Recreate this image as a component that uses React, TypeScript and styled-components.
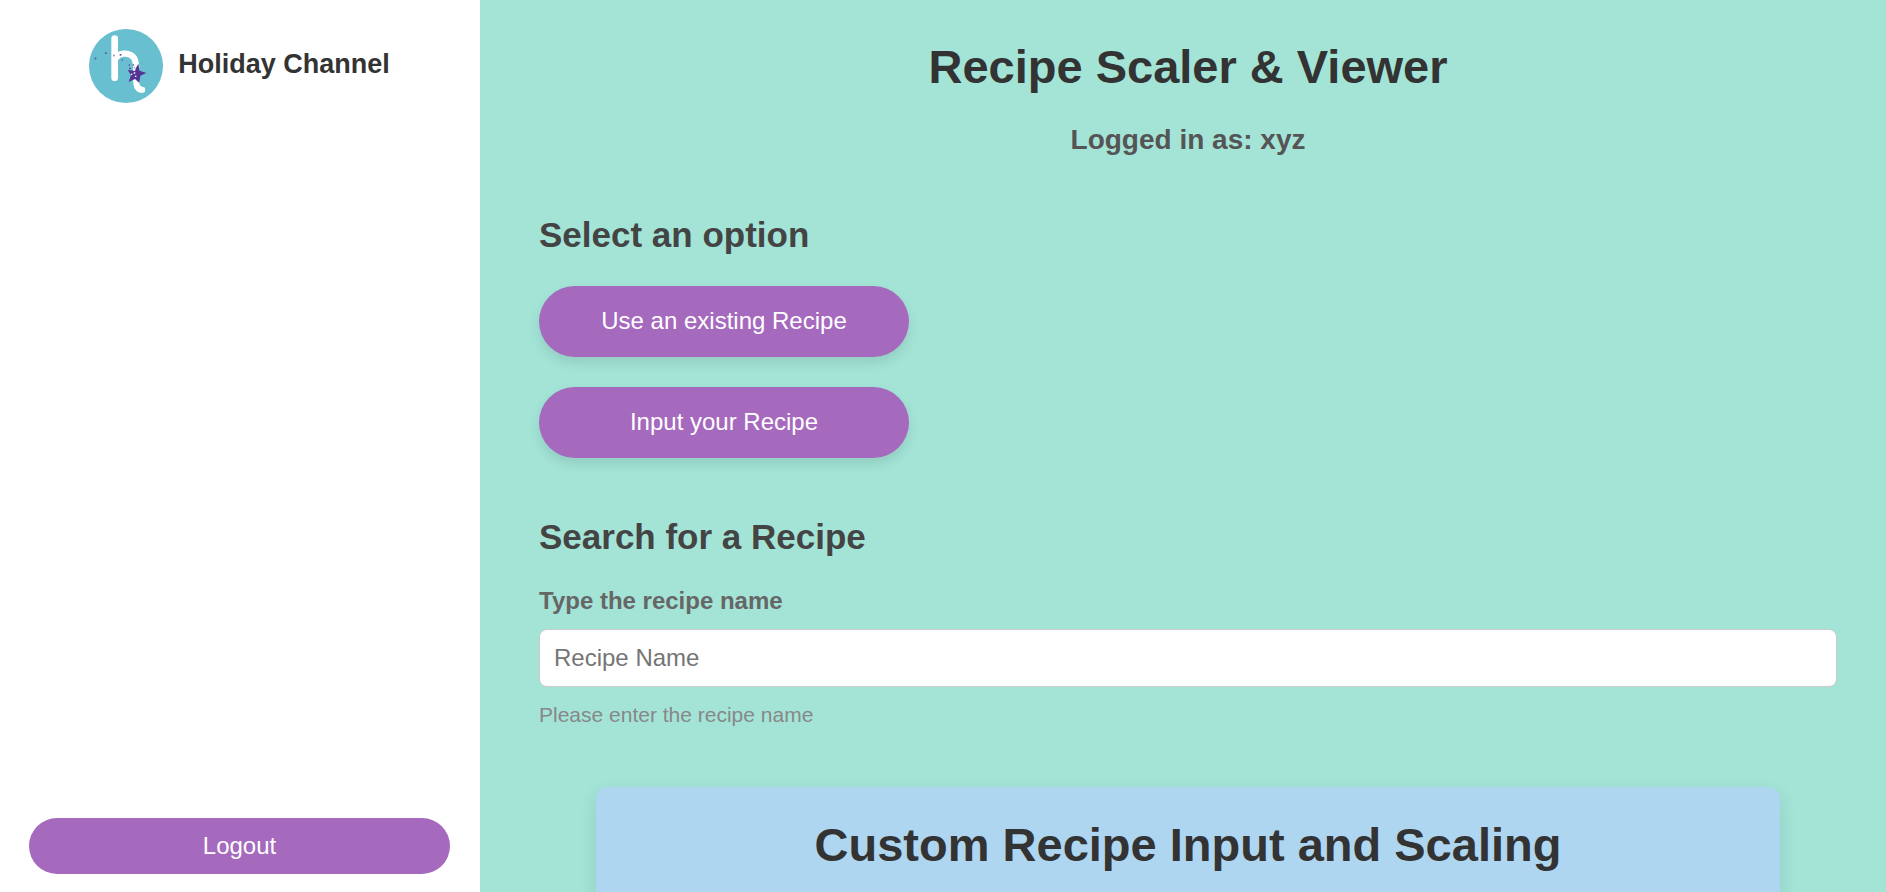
import React from "react";
import styled, { createGlobalStyle } from "styled-components";

const GlobalStyle = createGlobalStyle`
  *, *::before, *::after { box-sizing: border-box; }
  body {
    margin: 0;
    background: #a3e4d7;
    font-family: Arial, "Liberation Sans", sans-serif;
    color: #333;
  }
`;

const Page = styled.div`
  display: flex;
  height: 100vh;
  overflow: hidden;
`;

const Sidebar = styled.aside`
  flex: 0 0 480px;
  display: flex;
  flex-direction: column;
  justify-content: space-between;
  padding: 29px 30px 18px 29px;
  background: #fff;
`;

const Brand = styled.div`
  display: flex;
  align-items: center;
  justify-content: center;
  gap: 15px;
`;

const BrandLogo = styled.svg`
  display: block;
  width: 74px;
  height: 74px;
`;

const BrandName = styled.span`
  font-size: 27px;
  line-height: 30px;
  font-weight: bold;
  padding-bottom: 4px;
`;

const PillButton = styled.button<{ $raised?: boolean }>`
  width: 100%;
  max-width: ${({ $raised }) => ($raised ? "370px" : "none")};
  padding: ${({ $raised }) => ($raised ? "21px 24px 22px" : "14px 24px")};
  border: 0;
  border-radius: ${({ $raised }) => ($raised ? "36px" : "28px")};
  background: #a569bd;
  color: #fff;
  font-family: inherit;
  font-size: 24px;
  line-height: 28px;
  cursor: pointer;
  box-shadow: ${({ $raised }) => ($raised ? "0 6px 12px rgba(0, 0, 0, 0.1)" : "none")};
`;

const Main = styled.main`
  flex: 1;
  min-width: 0;
  overflow: hidden;
  padding: 39px 49px 0 59px;
`;

const Title = styled.h1`
  margin: 0;
  font-size: 47px;
  line-height: 56px;
  text-align: center;
`;

const UserLine = styled.h3`
  margin: 29px 0 0;
  font-size: 28px;
  line-height: 32px;
  text-align: center;
  color: #555;
`;

const Section = styled.section`
  display: flex;
  flex-direction: column;
  margin-top: 58px;
`;

const SectionTitle = styled.h2`
  margin: 0;
  font-size: 35px;
  line-height: 42px;
  color: #444;
`;

const Options = styled.div`
  display: flex;
  flex-direction: column;
  gap: 30px;
  margin-top: 30px;
`;

const Label = styled.label`
  margin-top: 29px;
  font-size: 24px;
  line-height: 28px;
  font-weight: bold;
  color: #666;
`;

const TextInput = styled.input`
  margin-top: 14px;
  width: 100%;
  padding: 14px 14px;
  border: 1px solid #ccc;
  border-radius: 8px;
  background: #fff;
  font-family: inherit;
  font-size: 24px;
  line-height: 28px;
  color: #333;
  &::placeholder { color: #757575; opacity: 1; }
`;

const Hint = styled.p`
  margin: 16px 0 0;
  font-size: 21px;
  line-height: 24px;
  color: #888;
`;

const Card = styled.section`
  margin: 60px 57px 0;
  padding: 30px 30px 60px;
  border-radius: 12px;
  background: #aed6f1;
  box-shadow: 0 6px 18px rgba(0, 0, 0, 0.1);
`;

const Logo = () => (
  <BrandLogo viewBox="30 28 222 222" role="img" aria-label="Holiday Channel logo">
    <circle cx="141" cy="139" r="111" fill="#67bfd0" />
    <g fill="none" stroke="#fff" strokeLinecap="round">
      <path d="M107 57V174" strokeWidth="20" />
      <path d="M110 116C118 100 146 97 161 110C171 119 172 137 172 153V181C172 201 178 210 189 210" strokeWidth="19" />
    </g>
    <path d="M178 132L182 153L202 160L184 168L181 190L168 178L149 187L156 166L146 151L166 153Z" fill="#543596" />
    <g fill="#fff">
      <rect x="164" y="148" width="5" height="5" />
      <rect x="164" y="158" width="5" height="4" />
      <rect x="168" y="168" width="4" height="4" />
      <rect x="156" y="162" width="4" height="4" />
    </g>
    <g fill="#67bfd0">
      <circle cx="184" cy="194" r="3" />
      <circle cx="191" cy="200" r="3" />
      <circle cx="196" cy="194" r="2" />
    </g>
    <g fill="#6546a3">
      <rect x="47" y="114" width="5" height="5" />
      <rect x="78" y="98" width="5" height="5" />
      <rect x="122" y="103" width="5" height="5" />
      <rect x="128" y="119" width="4" height="4" />
      <rect x="149" y="134" width="4" height="4" />
      <rect x="150" y="144" width="5" height="5" />
      <rect x="161" y="134" width="4" height="4" />
    </g>
    <g fill="#a99bd3">
      <rect x="102" y="105" width="6" height="5" />
      <rect x="144" y="124" width="5" height="5" />
      <rect x="164" y="142" width="4" height="4" />
    </g>
  </BrandLogo>
);

export default function App() {
  return (
    <>
      <GlobalStyle />
      <Page>
        <Sidebar>
          <Brand>
            <Logo />
            <BrandName>Holiday Channel</BrandName>
          </Brand>
          <PillButton type="button">Logout</PillButton>
        </Sidebar>
        <Main>
          <Title>Recipe Scaler &amp; Viewer</Title>
          <UserLine>Logged in as: xyz</UserLine>
          <Section>
            <SectionTitle>Select an option</SectionTitle>
            <Options>
              <PillButton type="button" $raised>Use an existing Recipe</PillButton>
              <PillButton type="button" $raised>Input your Recipe</PillButton>
            </Options>
          </Section>
          <Section>
            <SectionTitle>Search for a Recipe</SectionTitle>
            <Label htmlFor="recipe-name">Type the recipe name</Label>
            <TextInput id="recipe-name" type="text" placeholder="Recipe Name" aria-describedby="recipe-hint" />
            <Hint id="recipe-hint">Please enter the recipe name</Hint>
          </Section>
          <Card>
            <Title as="h2">Custom Recipe Input and Scaling</Title>
          </Card>
        </Main>
      </Page>
    </>
  );
}
